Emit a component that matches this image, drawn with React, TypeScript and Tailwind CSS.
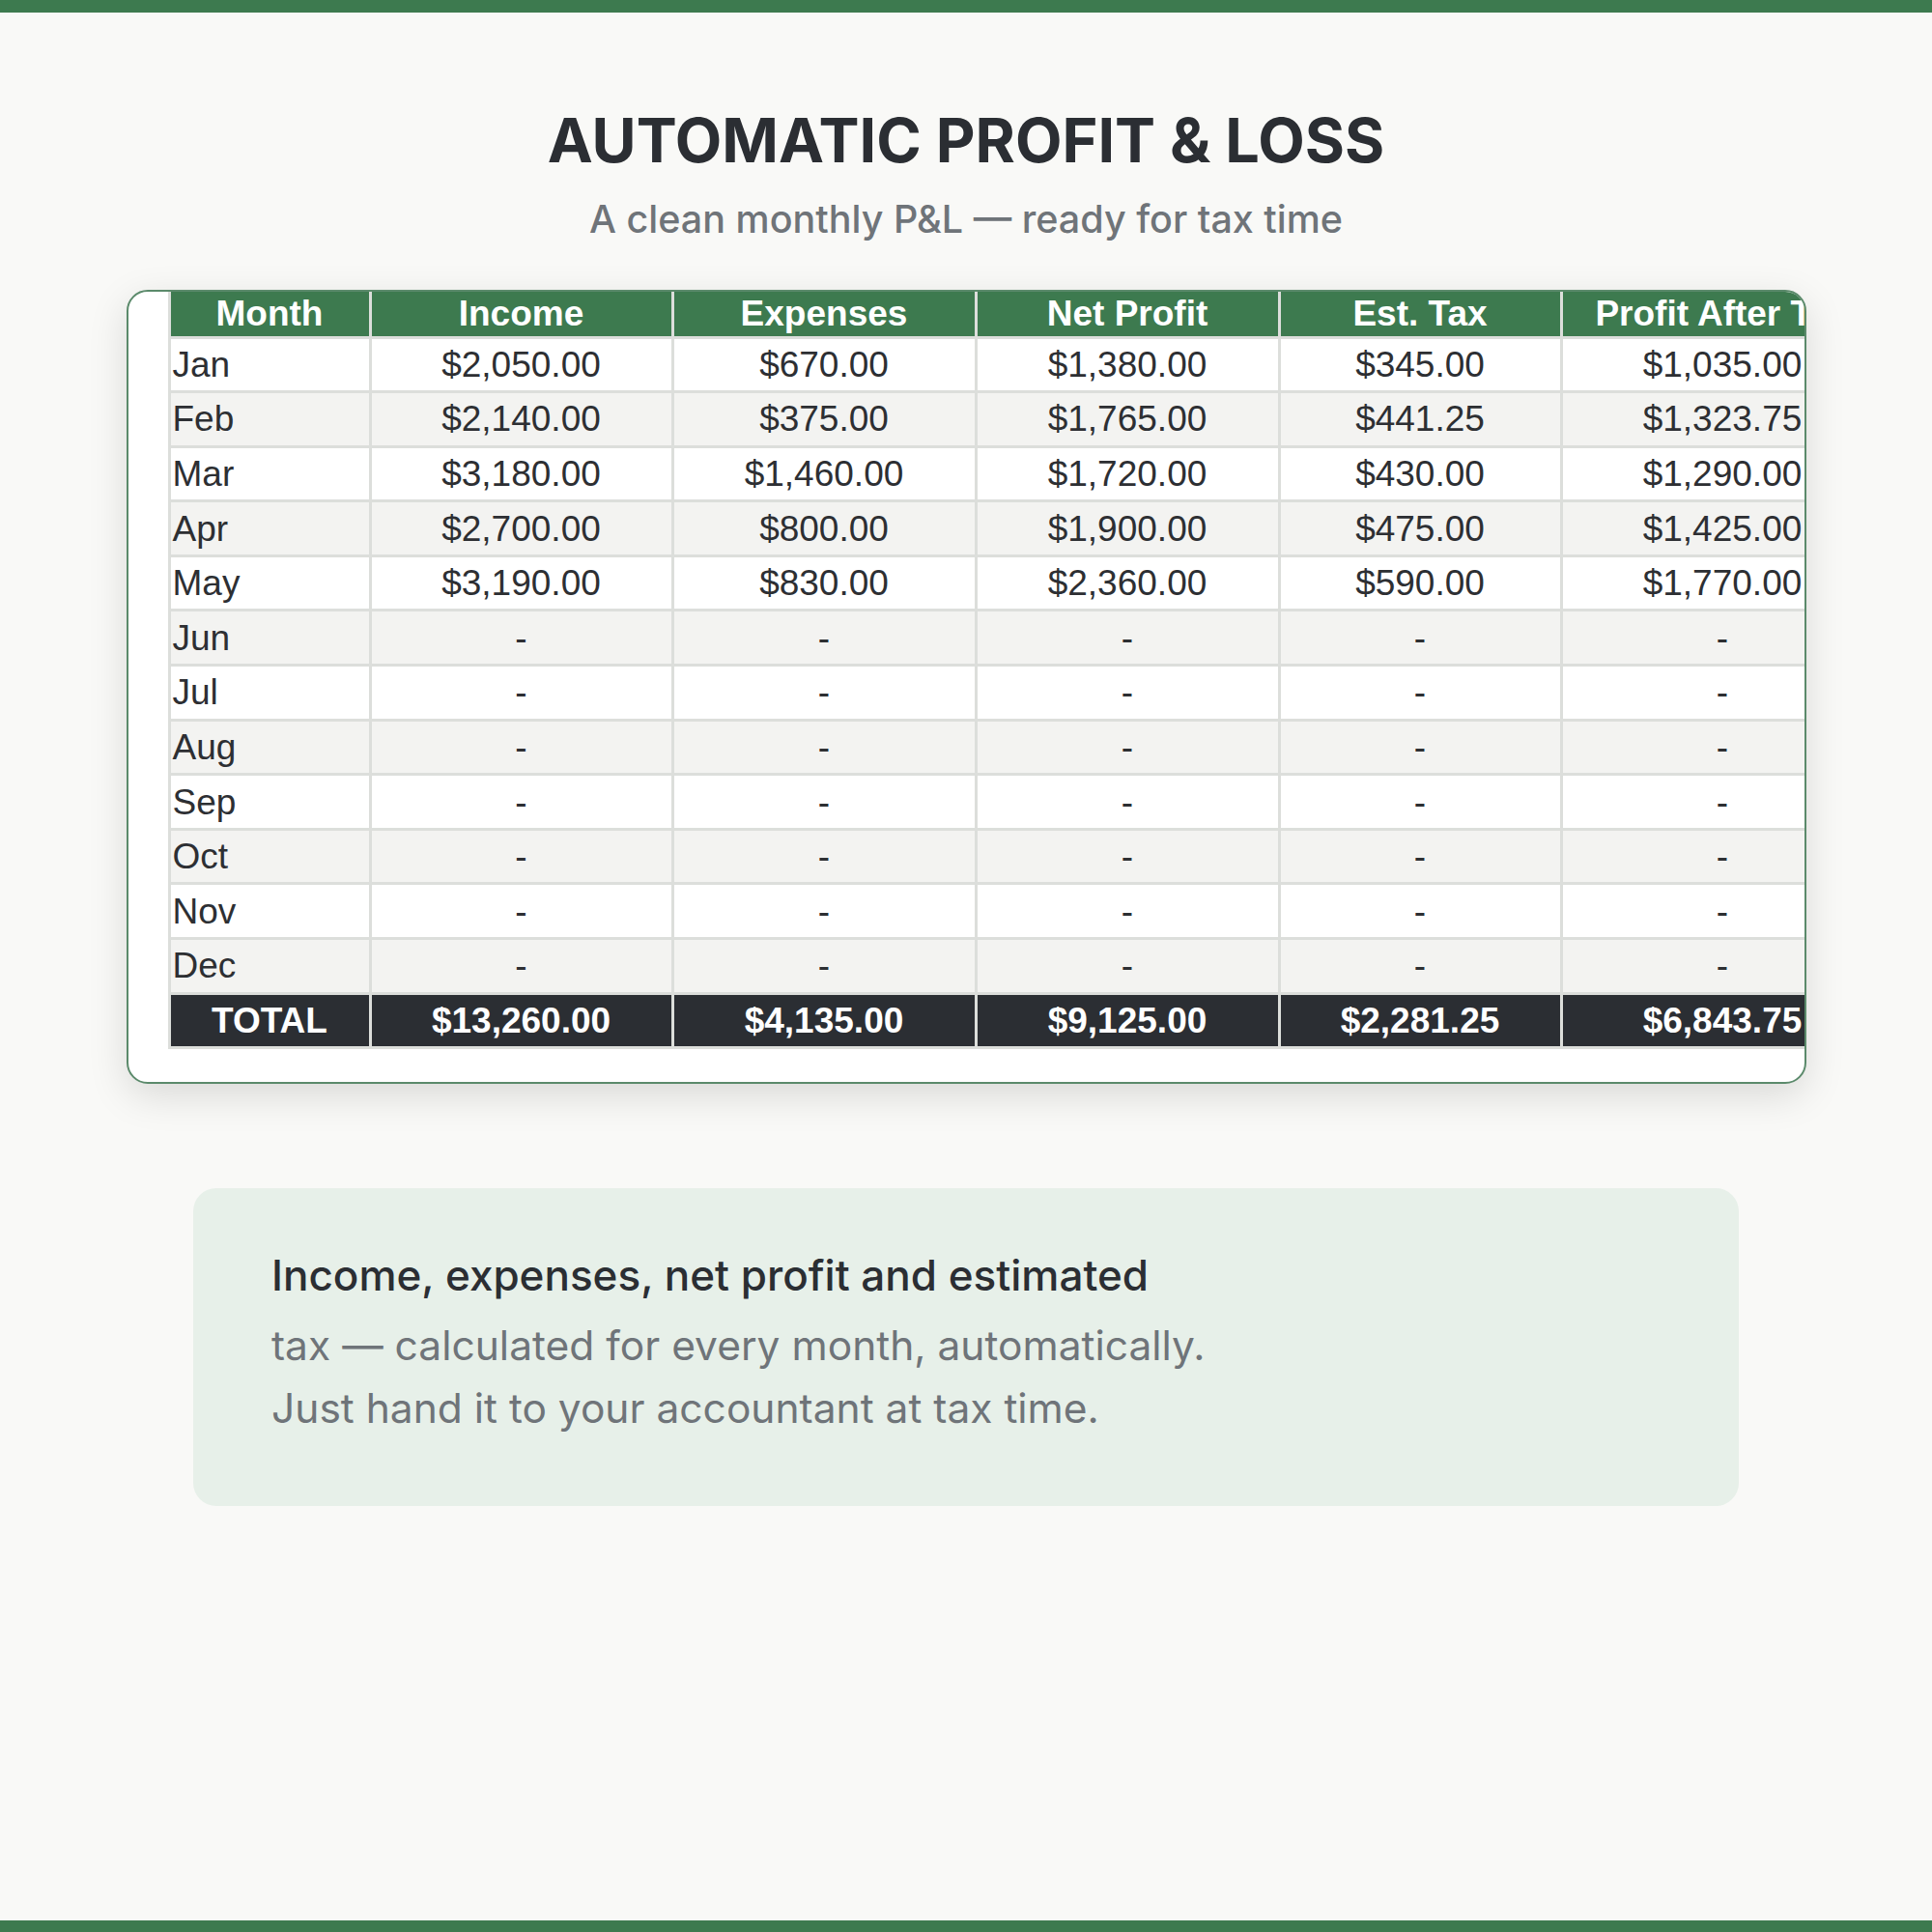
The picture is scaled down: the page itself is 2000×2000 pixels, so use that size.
const columns = ['Month', 'Income', 'Expenses', 'Net Profit', 'Est. Tax', 'Profit After Tax']

const rows = [
  ['Jan', '$2,050.00', '$670.00', '$1,380.00', '$345.00', '$1,035.00'],
  ['Feb', '$2,140.00', '$375.00', '$1,765.00', '$441.25', '$1,323.75'],
  ['Mar', '$3,180.00', '$1,460.00', '$1,720.00', '$430.00', '$1,290.00'],
  ['Apr', '$2,700.00', '$800.00', '$1,900.00', '$475.00', '$1,425.00'],
  ['May', '$3,190.00', '$830.00', '$2,360.00', '$590.00', '$1,770.00'],
  ['Jun', '-', '-', '-', '-', '-'],
  ['Jul', '-', '-', '-', '-', '-'],
  ['Aug', '-', '-', '-', '-', '-'],
  ['Sep', '-', '-', '-', '-', '-'],
  ['Oct', '-', '-', '-', '-', '-'],
  ['Nov', '-', '-', '-', '-', '-'],
  ['Dec', '-', '-', '-', '-', '-'],
]

const totals = ['TOTAL', '$13,260.00', '$4,135.00', '$9,125.00', '$2,281.25', '$6,843.75']

// widths of the sheet columns; the last one runs past the card and gets clipped
const colWidths = ['w-[208px]', 'w-[313px]', 'w-[314px]', 'w-[314px]', 'w-[292px]', 'w-[334px]']

export default function App() {
  return (
    <div className="w-[2000px] h-[2000px] bg-[#f9f9f7] flex flex-col items-center font-['Inter',sans-serif]">
      <div className="w-full h-[13px] bg-[#3d7a4f] shrink-0" />

      <h1 className="mt-[101px] text-[63px] leading-none font-bold text-[#2b2e33]">AUTOMATIC PROFIT &amp; LOSS</h1>
      <p className="mt-[30px] text-[39.5px] leading-[40px] font-medium text-[#6f7479]">
        A clean monthly P&amp;L — ready for tax time
      </p>

      <div className="mt-[53px] w-[1739px] h-[822px] bg-white border-2 border-[#5b8a6b] rounded-[22px] overflow-hidden shadow-[0_12px_40px_rgba(0,0,0,0.13)] pl-[41px] shrink-0">
        <table className="table-fixed border-collapse w-[1775px] font-['Liberation_Sans',Arial,sans-serif] text-[37px] text-[#2d2f33]">
          <colgroup>
            {colWidths.map((w, i) => (
              <col key={i} className={w} />
            ))}
          </colgroup>
          <thead>
            <tr className="h-[47px] bg-[#3d7a4f]">
              {columns.map((c) => (
                <th key={c} className="border-x-[3px] border-b-[3px] border-[#dcdedb] text-white font-bold text-center leading-none whitespace-nowrap p-0">
                  {c}
                </th>
              ))}
            </tr>
          </thead>
          <tbody>
            {rows.map((r, i) => (
              <tr key={r[0]} className={`h-[56.6px] ${i % 2 === 0 ? 'bg-white' : 'bg-[#f3f3f1]'}`}>
                {r.map((v, j) => (
                  <td
                    key={j}
                    className={`border-[3px] border-[#dcdedb] leading-none whitespace-nowrap p-0 ${
                      j === 0 ? 'text-left pl-[2px]' : 'text-center'
                    }`}
                  >
                    {v}
                  </td>
                ))}
              </tr>
            ))}
            <tr className="h-[56.6px] bg-[#2b2e33]">
              {totals.map((v) => (
                <td key={v} className="border-[3px] border-[#dcdedb] text-white font-bold text-center leading-none whitespace-nowrap p-0">
                  {v}
                </td>
              ))}
            </tr>
          </tbody>
        </table>
      </div>

      <div className="mt-[108px] w-[1600px] h-[329px] bg-[#e7f0e9] rounded-[24px] flex flex-col pt-[62px] pl-[81px] shrink-0">
        <p className="text-[44px] leading-[56px] font-medium text-[#2b2e33]">Income, expenses, net profit and estimated</p>
        <p className="mt-[12px] text-[42.5px] leading-[65px] text-[#6f7479]">
          tax — calculated for every month, automatically.
          <br />
          Just hand it to your accountant at tax time.
        </p>
      </div>

      <div className="flex-1" />
      <div className="w-full h-[12px] bg-[#3d7a4f] shrink-0" />
    </div>
  )
}
